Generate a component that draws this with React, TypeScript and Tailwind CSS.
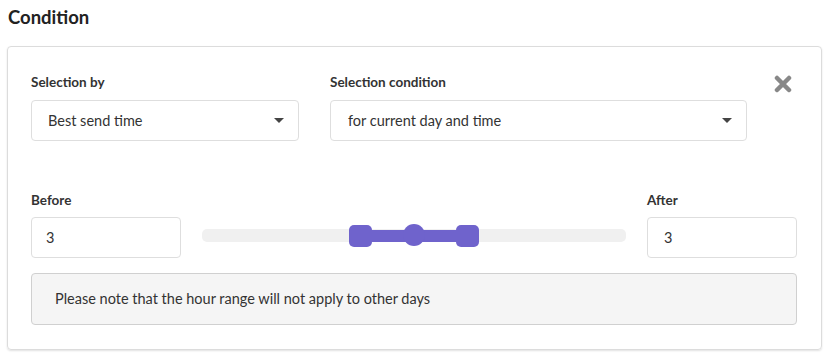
import React from "react";

function Caret() {
  return (
    <svg width="10" height="6" viewBox="0 0 10 6" className="shrink-0">
      <path d="M0 0 H10 L5 5 Z" fill="#444" />
    </svg>
  );
}

export default function App() {
  return (
    <div className="w-[838px] h-[361px] bg-white text-[#333]" style={{ fontFamily: "Lato, 'Noto Sans', sans-serif" }}>
      <div className="pl-[7px] pt-[5px] pr-[16px]">
        <h2 className="text-[18.5px] font-bold leading-[24px] text-[#222] h-[41px] pl-[1px]">Condition</h2>
        <div className="border border-[#dcdcdc] rounded-[4px] shadow-[0_1px_2px_rgba(0,0,0,0.12)] pl-[23px] pr-[24px] pt-[25px] pb-[24px]">
          <div className="flex items-start">
            <div className="w-[268px]">
              <div className="text-[13.5px] font-bold leading-[20px] h-[28px]">Selection by</div>
              <div className="h-[41px] border border-[#dedede] rounded-[4px] flex items-center justify-between pl-[16px] pr-[14px] text-[14.5px]">
                <span>Best send time</span>
                <Caret />
              </div>
            </div>
            <div className="w-[417px] ml-[31px]">
              <div className="text-[13.5px] font-bold leading-[20px] h-[28px]">Selection condition</div>
              <div className="h-[41px] border border-[#dedede] rounded-[4px] flex items-center justify-between pl-[17px] pr-[14px] text-[14.5px]">
                <span>for current day and time</span>
                <Caret />
              </div>
            </div>
            <div className="ml-[27px] mt-[3px]">
              <svg width="18" height="18" viewBox="0 0 18 18">
                <path d="M3 3 L15 15 M15 3 L3 15" stroke="#888" strokeWidth="4.5" strokeLinecap="round" />
              </svg>
            </div>
          </div>
          <div className="flex items-start mt-[49px]">
            <div className="w-[150px]">
              <div className="text-[13.5px] font-bold leading-[20px] h-[27px]">Before</div>
              <div className="h-[41px] border border-[#dedede] rounded-[4px] flex items-center pl-[14px] text-[14.5px]">3</div>
            </div>
            <div className="flex-1 mx-[21px] pt-[39px]">
              <div className="relative h-[13px] bg-[#f0f0f0] rounded-[5px]">
                <div className="absolute left-[147px] w-[130px] top-[1px] h-[12px] bg-[#6f63cc]" />
                <div className="absolute left-[147px] top-[-4px] w-[23px] h-[22px] rounded-[5px] bg-[#6f63cc]" />
                <div className="absolute left-[201px] top-[-5px] w-[22px] h-[22px] rounded-full bg-[#6f63cc]" />
                <div className="absolute left-[254px] top-[-4px] w-[23px] h-[22px] rounded-[5px] bg-[#6f63cc]" />
              </div>
            </div>
            <div className="w-[150px]">
              <div className="text-[13.5px] font-bold leading-[20px] h-[27px]">After</div>
              <div className="h-[41px] border border-[#dedede] rounded-[4px] flex items-center pl-[16px] text-[14.5px]">3</div>
            </div>
          </div>
          <div className="mt-[15px] h-[52px] border border-[#d0d0d0] rounded-[4px] bg-[#f5f5f5] flex items-center pl-[23px] text-[14.5px]">
            Please note that the hour range will not apply to other days
          </div>
        </div>
      </div>
    </div>
  );
}
